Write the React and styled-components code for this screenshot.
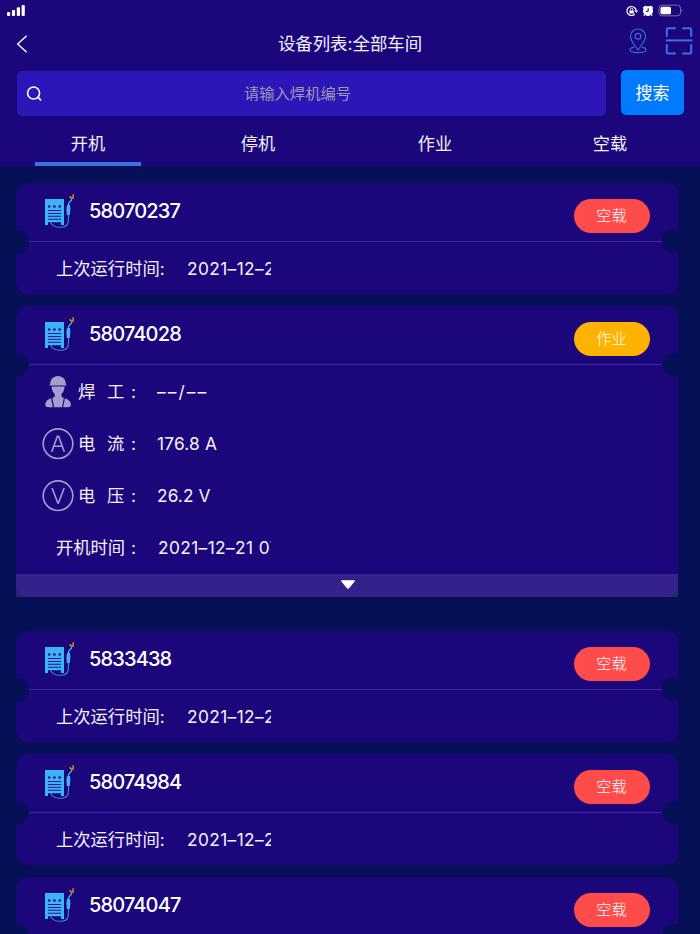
import React, {useState} from "react";
import styled, {createGlobalStyle} from "styled-components";

const GlobalStyle = createGlobalStyle`
    * {
        box-sizing: border-box;
    }

    body {
        margin: 0;
        background-color: #071057;
        font-family: Inter, "Noto Sans CJK SC", sans-serif;
        color: #f4f2ff;
        overflow: hidden;
    }
`;

const Page = styled.div`
    width: 700px;
    height: 934px;
    overflow: hidden;
    background-color: #071057;
`;

const Header = styled.header`
    height: 166px;
    background-color: #1b067b;
`;

const StatusBar = styled.div`
    display: flex;
    justify-content: space-between;
    height: 22px;
    padding: 4px 16px 0 7px;
`;

const StatusIcons = styled.div`
    display: flex;
    align-items: flex-start;
`;

const NavBar = styled.div`
    display: grid;
    grid-template-columns: 100px 1fr 100px;
    align-items: center;
    height: 43px;
`;

const BackButton = styled.button`
    display: flex;
    width: 40px;
    padding: 0 0 0 16px;
    border: none;
    background: none;
`;

const Title = styled.h1`
    margin: 0;
    font-size: 17.4px;
    font-weight: 400;
    line-height: 26px;
    text-align: center;
`;

const NavActions = styled.div`
    display: flex;
    justify-content: flex-end;
    align-items: center;
    gap: 18px;
    padding: 0 7px 6px 0;
`;

const SearchRow = styled.div`
    display: flex;
    gap: 15px;
    padding: 5px 16px 0 17px;
`;

const SearchBox = styled.div`
    display: flex;
    align-items: center;
    width: 589px;
    height: 45px;
    margin-top: 1px;
    padding: 0 54px 0 9px;
    border-radius: 5px;
    background-color: #2c16b7;
`;

const SearchInput = styled.input`
    flex: 1;
    height: 30px;
    padding: 0 0 1px;
    border: none;
    outline: none;
    background: none;
    color: #fff;
    font: 400 15.3px Inter, "Noto Sans CJK SC", sans-serif;
    text-align: center;

    &::placeholder {
        color: #9f98b2;
        opacity: 1;
    }
`;

const SearchButton = styled.button`
    width: 63px;
    height: 45px;
    padding: 0 0 2px;
    border: none;
    border-radius: 5px;
    background-color: #007aff;
    color: #fff;
    font: 400 17px Inter, "Noto Sans CJK SC", sans-serif;
`;

const Tabs = styled.nav`
    display: grid;
    grid-template-columns: 176px 164px 190px 160px;
    height: 50px;
    padding-top: 6px;
`;

const Tab = styled.button`
    display: flex;
    flex-direction: column;
    align-items: center;
    justify-content: space-between;
    height: 44px;
    padding: 9px 0 0;
    border: none;
    background: none;
    color: #f4f2ff;
    font: 400 17.2px/26px Inter, "Noto Sans CJK SC", sans-serif;

    &::after {
        content: "";
        width: 106px;
        height: 4px;
        background-color: ${({$active}) => ($active ? "#3f70e0" : "transparent")};
    }
`;

const List = styled.main`
    display: flex;
    flex-direction: column;
    padding: 17px 22px 0 16px;
`;

const Card = styled.section`
    flex: none;
    margin-bottom: ${({$open}) => ($open ? "34px" : "12px")};
    border-radius: 12px;
    background-color: #1b067b;
`;

const CardHead = styled.div`
    position: relative;
    display: flex;
    align-items: flex-start;
    height: 59px;
    padding: 11px 28.5px 0 28px;

    &::after {
        content: "";
        position: absolute;
        left: 13px;
        right: 16px;
        bottom: 0;
        height: 1px;
        background-color: #4423ad;
    }
`;

const Notch = styled.span`
    position: absolute;
    top: 47px;
    ${({$side}) => ($side === "left" ? "left: -10px;" : "right: -7px;")}
    width: 23px;
    height: 23px;
    border-radius: 50%;
    background-color: #071057;
`;

const DeviceNo = styled.div`
    flex: 1;
    margin-left: 12px;
    padding-top: 4px;
    color: #fff;
    font-size: 20px;
    font-weight: 500;
    line-height: 26px;
    letter-spacing: -0.85px;
`;

const Badge = styled.span`
    width: 76px;
    height: 34px;
    margin-top: 5px;
    border-radius: 17px;
    background-color: ${({$color}) => $color};
    color: #fff;
    font-size: 15.2px;
    font-weight: 300;
    line-height: 33px;
    text-align: center;
`;

const Row = styled.div`
    display: flex;
    align-items: center;
    height: 52px;
    padding: 2px 0 0 ${({$icon}) => ($icon ? "26px" : "40px")};
    font-size: 17.3px;
    font-weight: 400;
    line-height: 26px;
    white-space: pre;
`;

const Label = styled.span`
    display: flex;
    width: ${({$width}) => $width}px;
    margin-left: ${({$indent}) => $indent || 0}px;
`;

const Word = styled.span`
    width: ${({$width}) => $width}px;
`;

const Value = styled.span`
    width: ${({$width}) => $width}px;
    overflow: hidden;
    letter-spacing: ${({$spacing}) => $spacing ?? 0.4}px;
`;

const Collapse = styled.button`
    display: flex;
    justify-content: center;
    width: 100%;
    height: 23px;
    margin-top: 1px;
    padding: 5px 0 0 2px;
    border: none;
    background-color: rgba(255, 255, 255, 0.11);
`;

const SignalIcon = () => (
    <svg width="20" height="13" viewBox="0 0 20 13" fill="#fff">
        <rect x="0" y="8" width="3.2" height="4" rx="1"/>
        <rect x="4.9" y="6" width="3.2" height="6" rx="1"/>
        <rect x="9.8" y="3.3" width="3.2" height="8.7" rx="1"/>
        <rect x="14.6" y="1" width="3.2" height="11" rx="1"/>
    </svg>
);

const LockIcon = () => (
    <svg width="17" height="14" viewBox="0 0 17 14" fill="none" stroke="#fff">
        <path d="M9.8 4A4.5 4.5 0 1 0 9.8 10" strokeWidth="1.2"/>
        <path d="M9.2 3.3A4.6 4.6 0 0 1 11.2 7" strokeWidth="1.2"/>
        <path d="M9.3 6.4h3.8l-1.9 2.3z" fill="#fff" stroke="none"/>
        <rect x="4.4" y="6.4" width="4.4" height="3.2" rx=".5" fill="#fff" stroke="none"/>
        <path d="M5.4 6.5V5.4a1.2 1.2 0 0 1 2.4 0v1.1" strokeWidth=".9"/>
    </svg>
);

const AlarmIcon = () => (
    <svg width="16" height="14" viewBox="0 0 16 14" fill="none" stroke="#fff">
        <circle cx="6" cy="7" r="4.5" fill="#fff"/>
        <path d="M1.2 4.4L3.8 2M8.2 2l2.6 2.4" strokeWidth="1.6"/>
        <path d="M2.8 10.3l-1.1 1.3M9.2 10.3l1.1 1.3" strokeWidth="1.3"/>
        <path d="M6.2 4.2V7.3H3.8" stroke="#1b067b" strokeWidth="1"/>
    </svg>
);

const BatteryIcon = () => (
    <svg width="26" height="13" viewBox="0 0 26 13">
        <rect x="1" y="1.2" width="21.5" height="10.6" rx="3" fill="none" stroke="#7a6cae"/>
        <rect x="2.5" y="2.8" width="10.5" height="7.5" rx="1.6" fill="#fff"/>
        <path d="M23.7 4.8q1.7 1.7 0 3.4z" fill="#8d80bb"/>
    </svg>
);

const BackIcon = () => (
    <svg width="12" height="18" viewBox="0 0 12 18" fill="none" stroke="#fff" strokeWidth="1.4">
        <path d="M10.7 .8L1.7 9l9 8.2"/>
    </svg>
);

const PinIcon = () => (
    <svg width="18" height="26" viewBox="0 0 18 26" fill="none" stroke="#386bd8" strokeWidth="1.2">
        <path d="M9 22C6.2 17.5 1.4 12.8 1.4 8.6a7.6 7.6 0 0 1 15.2 0C16.6 12.8 11.8 17.5 9 22z"/>
        <circle cx="9" cy="8.3" r="2.9"/>
        <path d="M5.2 19.2C2.7 19.7 1 20.7 1 21.8c0 1.6 3.6 2.8 8 2.8s8-1.2 8-2.8c0-1.1-1.7-2.1-4.2-2.6"/>
    </svg>
);

const ScanIcon = () => (
    <svg width="28" height="28" viewBox="0 0 28 28" fill="none" stroke="#3d70e2" strokeWidth="2">
        <path d="M10.7 1.2H3.3Q1.8 1.2 1.8 2.7V9.8M17.3 1.2h7.4q1.5 0 1.5 1.5v7.1M10.7 26.4H3.3Q1.8 26.4 1.8 24.9V17.2M17.3 26.4h7.4q1.5 0 1.5-1.5V17.2"/>
        <path d="M.8 13.4h26.6"/>
    </svg>
);

const SearchIcon = () => (
    <svg width="17" height="17" viewBox="0 0 17 17" fill="none" stroke="#fff" strokeWidth="1.6">
        <circle cx="7.6" cy="8" r="6"/>
        <path d="M11.8 12.2l3.3 3.1"/>
    </svg>
);

const WelderIcon = () => (
    <svg width="33" height="36" viewBox="0 0 33 36" fill="none">
        <path d="M1 5h19v26h-3v-2.8H4V31H1z" fill="#3eb2f7"/>
        <g fill="#1b067b">
            <circle cx="5.2" cy="12.5" r="1.2"/>
            <circle cx="10.4" cy="12.5" r="1.2"/>
            <circle cx="15.7" cy="12.5" r="1.2"/>
        </g>
        <path d="M4 16.5h13M4 19.5h13M4 22.3h13M4 25.2h13" stroke="#241497" strokeWidth="1.1"/>
        <path d="M6.5 28.2C8 32 13 33.7 18 33.2c4.5-.4 6.4-2.5 6.4-6.7V21" stroke="#2f8fdf" strokeWidth="1.1"/>
        <path d="M23 11h3l.4 4-.6 6h-3l-.4-6z" fill="#3eb2f7"/>
        <path d="M24.3 11.2C24 7.5 27.6 8 27.9 4.4" stroke="#3eb2f7" strokeWidth="1.3"/>
        <path d="M25.6 2.4l1.7 1.7h1.8L29.2.2" stroke="#d98c10" strokeWidth="1.5"/>
    </svg>
);

const WorkerIcon = () => (
    <svg width="32" height="34" viewBox="0 0 32 34" fill="#a59dcc">
        <path d="M8.2 9.2C8.2 4.6 11.3 1 16 1s7.9 3.6 7.9 8.2l1.2 1.3H7z"/>
        <path d="M9.6 11.6h13c0 3.2-1.5 6.3-3.3 7.6l.3 2c.3 1 1.4 1.4 2.2 1.7L20 32.2H12.2l-1.9-9.3c.9-.3 2-.7 2.3-1.7l.3-2c-2-1.3-3.3-4.4-3.3-7.6z"/>
        <path d="M9.1 23.2l1.8 9H6.3c-2 0-3-.9-3-2.4 0-3.4 2.4-5.6 5.8-6.6zM22.9 23.2l-1.8 9h4.7c2 0 3.1-.9 3.1-2.4 0-3.4-2.5-5.6-6-6.6z"/>
    </svg>
);

const CurrentIcon = () => (
    <svg width="32" height="32" viewBox="0 0 32 32" fill="none" stroke="#a59dcc" strokeWidth="1.6">
        <circle cx="16" cy="15.7" r="14.8"/>
        <path d="M9.7 23.7L15.4 8.3h1.2L22.3 23.7M12 18.2h8"/>
    </svg>
);

const VoltageIcon = () => (
    <svg width="32" height="32" viewBox="0 0 32 32" fill="none" stroke="#a59dcc" strokeWidth="1.6">
        <circle cx="16" cy="15.7" r="14.8"/>
        <path d="M10 8l5.8 15h.6L22.2 8"/>
    </svg>
);

const CaretIcon = () => (
    <svg width="16" height="12" viewBox="0 0 16 12">
        <path d="M1.4 1.8h13.2L9 8.8q-1 1-2 0z" fill="#fff" stroke="#fff" strokeWidth="1" strokeLinejoin="round"/>
    </svg>
);

const STATUS_COLORS = {
    空载: "#ff4b49",
    作业: "#ffb300",
};

const tabs = ["开机", "停机", "作业", "空载"];

const devices = [
    {no: "58070237", status: "空载", lastRun: "2021–12–21"},
    {
        no: "58074028",
        status: "作业",
        startTime: "2021–12–21 07",
        details: [
            {icon: <WorkerIcon/>, words: ["焊", "工"], value: "––/––", spacing: 2.1},
            {icon: <CurrentIcon/>, words: ["电", "流"], value: "176.8 A", spacing: 0.2},
            {icon: <VoltageIcon/>, words: ["电", "压"], value: "26.2 V", spacing: 0.1},
        ],
    },
    {no: "5833438", status: "空载", lastRun: "2021–12–21"},
    {no: "58074984", status: "空载", lastRun: "2021–12–21"},
    {no: "58074047", status: "空载", lastRun: "2021–12–21"},
];

const DeviceCard = ({device}) => (
    <Card $open={Boolean(device.details)}>
        <CardHead>
            <Notch $side="left"/>
            <Notch $side="right"/>
            <WelderIcon/>
            <DeviceNo>{device.no}</DeviceNo>
            <Badge $color={STATUS_COLORS[device.status]}>{device.status}</Badge>
        </CardHead>
        {device.details ? (
            <>
                {device.details.map(({icon, words, value, spacing}) => (
                    <Row key={words.join("")} $icon>
                        {icon}
                        <Label $width={79} $indent={4}>
                            <Word $width={29}>{words[0]}</Word>
                            <Word $width={24}>{words[1]}</Word>
                            :
                        </Label>
                        <Value $width={114} $spacing={spacing}>{value}</Value>
                    </Row>
                ))}
                <Row>
                    <Label $width={102}>
                        <Word $width={75}>开机时间</Word>
                        :
                    </Label>
                    <Value $width={113}>{device.startTime}</Value>
                </Row>
                <Collapse>
                    <CaretIcon/>
                </Collapse>
            </>
        ) : (
            <Row>
                <Label $width={131}>上次运行时间:</Label>
                <Value $width={84}>{device.lastRun}</Value>
            </Row>
        )}
    </Card>
);

const App = () => {
    const [activeTab, setActiveTab] = useState("开机");
    const [keyword, setKeyword] = useState("");

    return (
        <Page>
            <GlobalStyle/>
            <Header>
                <StatusBar>
                    <SignalIcon/>
                    <StatusIcons>
                        <LockIcon/>
                        <AlarmIcon/>
                        <BatteryIcon/>
                    </StatusIcons>
                </StatusBar>
                <NavBar>
                    <BackButton>
                        <BackIcon/>
                    </BackButton>
                    <Title>设备列表:全部车间</Title>
                    <NavActions>
                        <PinIcon/>
                        <ScanIcon/>
                    </NavActions>
                </NavBar>
                <SearchRow>
                    <SearchBox>
                        <SearchIcon/>
                        <SearchInput
                            placeholder="请输入焊机编号"
                            value={keyword}
                            onChange={(e) => setKeyword(e.target.value)}
                        />
                    </SearchBox>
                    <SearchButton>搜索</SearchButton>
                </SearchRow>
                <Tabs>
                    {tabs.map((tab) => (
                        <Tab key={tab} $active={tab === activeTab} onClick={() => setActiveTab(tab)}>
                            {tab}
                        </Tab>
                    ))}
                </Tabs>
            </Header>
            <List>
                {devices.map((device) => (
                    <DeviceCard key={device.no} device={device}/>
                ))}
            </List>
        </Page>
    );
};

export default App;
